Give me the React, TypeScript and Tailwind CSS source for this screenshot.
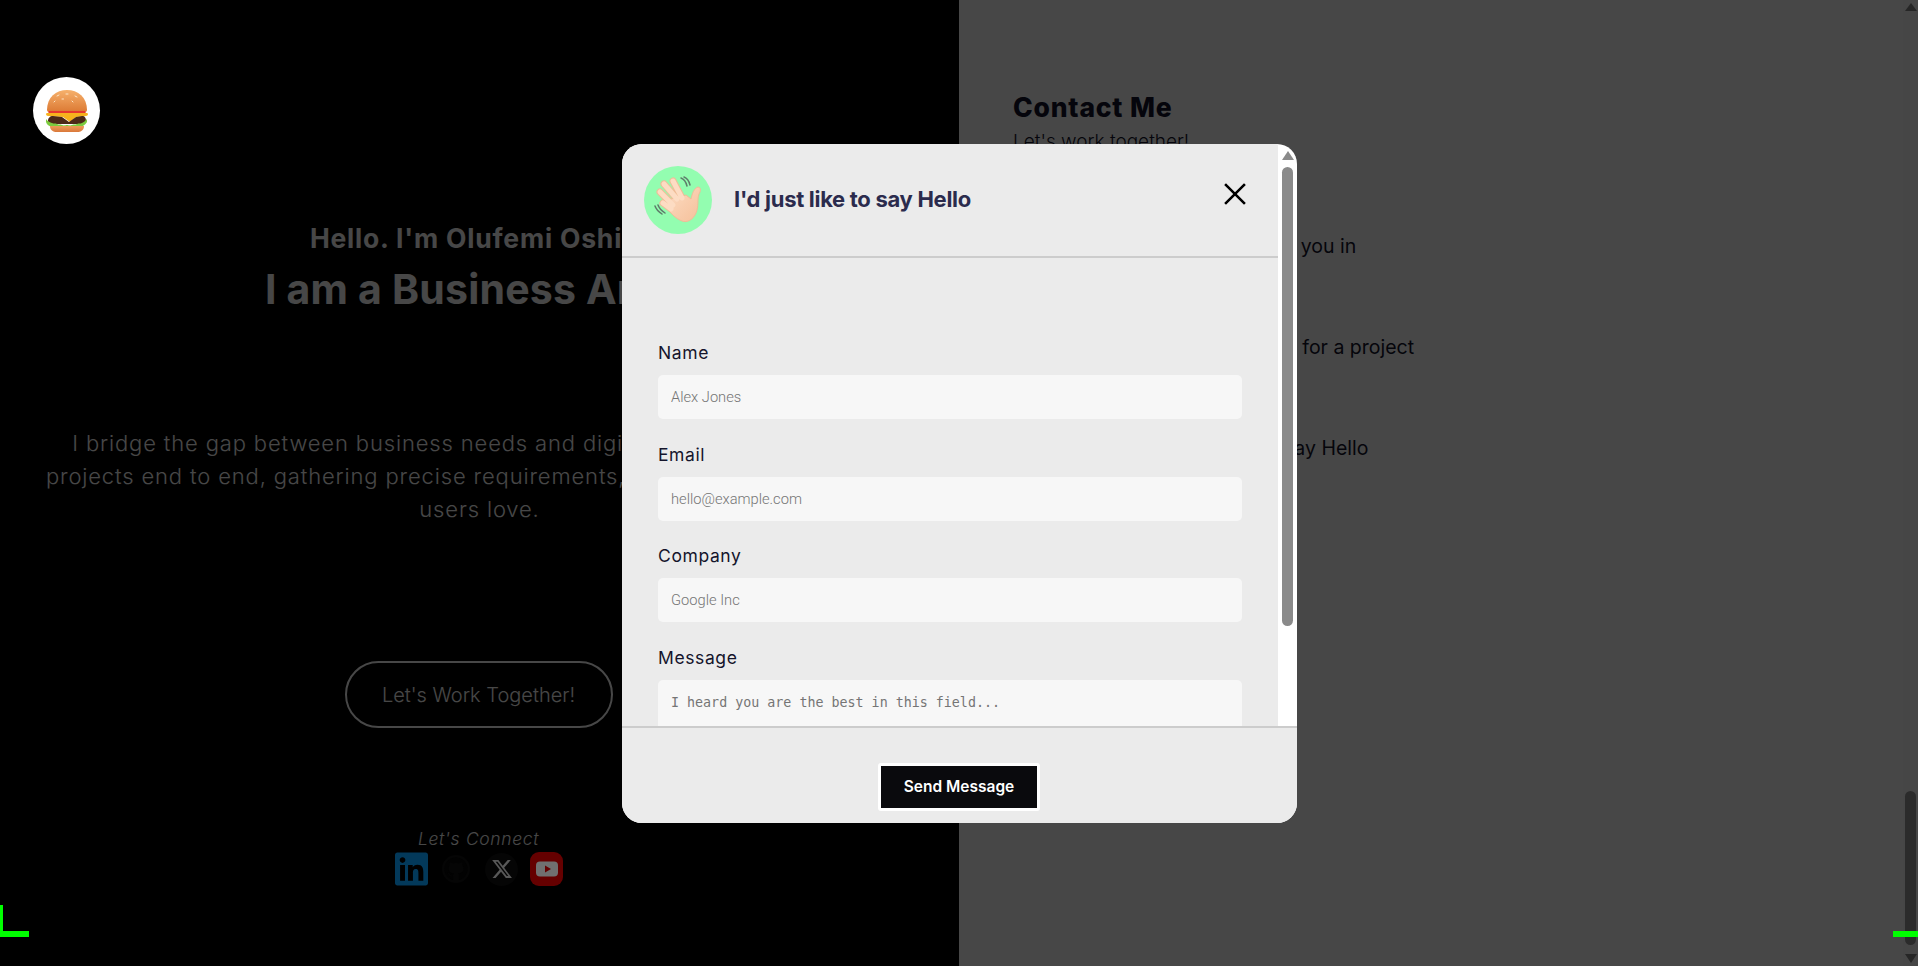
import { FaGithub, FaLinkedin } from "react-icons/fa";
import { FaXTwitter } from "react-icons/fa6";

const heading = "font-['Inter',sans-serif]";

const fields = [
  { label: "Name", placeholder: "Alex Jones" },
  { label: "Email", placeholder: "hello@example.com" },
  { label: "Company", placeholder: "Google Inc" },
];

function Burger() {
  return (
    <svg viewBox="0 0 42 42" className="h-[42px] w-[42px]">
      <defs>
        <linearGradient id="bun" x1="0" y1="0" x2="0" y2="1">
          <stop offset="0" stopColor="#f6b16c" />
          <stop offset="1" stopColor="#dc7a34" />
        </linearGradient>
        <linearGradient id="bunLow" x1="0" y1="0" x2="0" y2="1">
          <stop offset="0" stopColor="#ee9c58" />
          <stop offset="1" stopColor="#d9783a" />
        </linearGradient>
      </defs>
      <path d="M1 20C1 7 10 0 21 0s20 7 20 20c0 1-1 2-2 2H3c-1 0-2-1-2-2z" fill="url(#bun)" />
      <path d="M11 6l2-1M20 4h2M29 6l2 1M16 9h1.500M26 11l1 1M8 12l1-1" stroke="#fde6c8" strokeWidth="1" strokeLinecap="round" />
      <path d="M3 21h36c1 0 1 4-1 4H5c-3 0-3-4-2-4z" fill="#e8372f" />
      <path d="M0 24c0-1 1-1 2-1h38c1 0 2 0 2 1s-1 2-2 2l-10 1-6 5-7-5-15-1c-1 0-2-1-2-2z" fill="#f7b21d" />
      <path d="M2 31c0-3 2-5 5-5l9 1 7 5 7-5 6-1c3 0 4 2 4 5 0 2-2 3-4 3H6c-2 0-4-1-4-3z" fill="#4d2a18" />
      <path d="M0 29c2 3 4 3 6 4s3 0 5 1 3 0 5 1 4 0 5 0 3 1 5 0 3 0 5-1 3 0 5-1 3-2 5-4v3c-2 3-4 4-6 5H6c-3-1-5-2-6-5z" fill="#7ccb3f" />
      <path d="M4 36h34c0 4-3 6-7 6H11c-4 0-7-2-7-6z" fill="url(#bunLow)" />
    </svg>
  );
}

function WaveHand() {
  return (
    <svg viewBox="0 0 68 68" className="h-[68px] w-[68px]">
      <defs>
        <linearGradient id="palm" x1="0" y1="0" x2="1" y2="1">
          <stop offset="0" stopColor="#fddcc3" />
          <stop offset="1" stopColor="#f5c09a" />
        </linearGradient>
      </defs>
      <g stroke="#efbd98" strokeWidth="7" strokeLinecap="round">
        <path d="M29 15l9 17M20 18l13 15M16 26l13 13M19 37l8 6" />
      </g>
      <path
        d="M27 33L42 29l5 4C48 28 50 22 54 21c3 0 3 4 1 7-2 6 0 12-3 19-3 7-9 10-14 8-6-2-13-9-16-15z"
        fill="url(#palm)"
        stroke="#efbd98"
        strokeWidth="1"
      />
      <g stroke="#fddcc3" strokeWidth="5" strokeLinecap="round">
        <path d="M29 15l9 17M20 18l13 15M16 26l13 13M19 37l8 6" />
      </g>
      <path d="M37 12c3 1 5 4 6 8M40 11c3 1 5 4 6 8" stroke="#5f7d6b" strokeWidth="1.500" fill="none" strokeLinecap="round" />
      <path d="M11 40c1 3 4 6 7 8M14 39c1 3 4 6 7 8" stroke="#5f7d6b" strokeWidth="1.500" fill="none" strokeLinecap="round" />
    </svg>
  );
}

function Hero() {
  return (
    <section className="relative flex h-full w-[959px] shrink-0 flex-col items-center bg-black text-white">
      <div className="absolute top-[77px] left-[33px] z-20 flex h-[67px] w-[67px] items-center justify-center rounded-full bg-white">
        <Burger />
      </div>
      <h2 className={`${heading} mt-[220px] whitespace-nowrap text-[26.5px] leading-[36px] font-bold tracking-[0.8px]`}>
        Hello. I'm Olufemi Oshin.
      </h2>
      <h1 className={`${heading} mt-[6px] whitespace-nowrap text-[41px] leading-[54px] font-bold tracking-[0.2px]`}>I am a Business Archi</h1>
      <p className={`${heading} mt-[111px] text-center text-[22px] leading-[33px] font-light tracking-[0.85px] whitespace-nowrap`}>
        I bridge the gap between business needs and digital solutions. I deliver IT
        <br />
        projects end to end, gathering precise requirements, and delivering great apps
        <br />
        users love.
      </p>
      <button
        className={`${heading} mt-[135px] mr-[2px] h-[67px] w-[268px] rounded-full border-2 border-white text-[20px] font-light`}
      >
        Let's Work Together!
      </button>
      <p className={`${heading} mt-[99px] mr-[2px] text-[17.5px] leading-[24px] font-light tracking-[0.65px] italic`}>Let's Connect</p>
      <div className="relative z-20 mt-[-1px] mr-[1px] flex items-center">
        <FaLinkedin className="h-[38px] w-[33px] text-[#03395a]" />
        <span className="ml-[14px] flex h-[28px] w-[28px] items-center justify-center rounded-full bg-[#050505]">
          <FaGithub className="h-[24px] w-[24px] text-[#020202]" />
        </span>
        <span className="ml-[15px] flex h-[33px] w-[33px] items-center justify-center rounded-full bg-[#050505]">
          <FaXTwitter className="h-[22px] w-[22px] text-[#585858]" />
        </span>
        <span className="ml-[12px] flex h-[34px] w-[33px] items-center justify-center rounded-[9px] bg-[#650000]">
          <svg viewBox="0 0 24 24" className="h-[24px] w-[24px]">
            <rect x="1" y="4.500" width="22" height="15" rx="4" fill="#707070" />
            <path d="M10 8.500l6 3.500-6 3.500z" fill="#650000" />
          </svg>
        </span>
      </div>
    </section>
  );
}

function ContactPanel() {
  return (
    <section className="h-full min-w-0 flex-1 bg-white pt-[90px] pl-[54px] text-[#14142b]">
      <h2 className={`${heading} text-[26.5px] leading-[34px] font-extrabold tracking-[0.8px]`}>Contact Me</h2>
      <p className={`${heading} mt-[4px] text-[19px] leading-[28px] font-light`}>Let's work together!</p>
      <div className={`${heading} mt-[76px] flex flex-col gap-[73px] text-[19.5px] leading-[28px] whitespace-nowrap`}>
        <p className="pl-[116px]">I would like to hire you in</p>
        <p className="pl-[27px]">I would like to hire someone for a project</p>
        <p className="pl-[101px]">I would just like to say Hello</p>
      </div>
    </section>
  );
}

function ContactModal() {
  return (
    <div className="absolute top-[144px] left-[622px] z-10 flex h-[679px] w-[675px] flex-col overflow-hidden rounded-[20px] bg-white">
      <div className="flex min-h-0 flex-1">
        <div className="min-w-0 flex-1 overflow-hidden bg-[#ebebeb]">
          <header className="flex h-[114px] items-center border-b-2 border-[#cccccc] pr-[29px] pl-[22px]">
            <div className="h-[68px] w-[68px] shrink-0 rounded-full bg-[#93fdb0]">
              <WaveHand />
            </div>
            <h3 className={`${heading} mb-[2px] ml-[22px] flex-1 text-[22px] font-bold tracking-[-0.3px] text-[#2b2b4d]`}>
              I'd just like to say Hello
            </h3>
            <svg viewBox="0 0 24 24" className="mb-[12px] h-[28px] w-[28px]" fill="none" stroke="#000" strokeWidth="2.2">
              <path d="M3.500 3.500l17 17M20.500 3.500l-17 17" />
            </svg>
          </header>
          <form className="px-[36px] pt-[82px]">
            {fields.map((f) => (
              <label key={f.label} className="mb-[22.67px] block">
                <span className={`${heading} mb-[9px] block text-[17.5px] leading-[26px] tracking-[0.6px] text-[#14142b]`}>{f.label}</span>
                <input
                  placeholder={f.placeholder}
                  className="h-[44px] w-full rounded-[5px] bg-[#f7f7f7] px-[13px] font-['Roboto',sans-serif] text-[14.7px] font-light outline-none placeholder:text-[#757575]"
                />
              </label>
            ))}
            <label className="block">
              <span className={`${heading} mb-[9px] block text-[17.5px] leading-[26px] tracking-[0.6px] text-[#14142b]`}>Message</span>
              <textarea
                placeholder="I heard you are the best in this field..."
                className="h-[120px] w-full resize-none rounded-[5px] bg-[#f7f7f7] px-[13px] py-[15px] font-['DejaVu_Sans_Mono',monospace] text-[13.33px] leading-[16px] outline-none placeholder:text-[#757575]"
              />
            </label>
          </form>
        </div>
        <div className="flex w-[19px] shrink-0 flex-col items-center pt-[7px]">
          <div className="h-0 w-0 border-x-[6.5px] border-b-[9px] border-x-transparent border-b-[#8a8a8a]" />
          <div className="mt-[7px] h-[459px] w-[11px] rounded-full bg-[#8a8a8a]" />
        </div>
      </div>
      <footer className="flex h-[97px] shrink-0 items-start justify-center border-t-2 border-[#cccccc] bg-[#ebebeb] pt-[35px]">
        <button className="mr-[1px] h-[48px] w-[162px] rounded-[3px] border-[3px] border-white bg-[#0a0a0d] font-['Inter',sans-serif] text-[15.5px] font-semibold text-white">
          Send Message
        </button>
      </footer>
    </div>
  );
}

export default function App() {
  return (
    <div className="relative flex h-[966px] w-full overflow-hidden">
      <Hero />
      <ContactPanel />
      {/* dim layer sits over both panels and the page scrollbar */}
      <div className="absolute inset-y-0 right-0 flex w-[15px] flex-col items-center bg-[#fafafa]">
        <div className="mt-[3px] h-0 w-0 border-x-[6px] border-b-[8px] border-x-transparent border-b-[#888888]" />
        <div className="mt-auto h-[154px] w-[11px] rounded-full bg-[#999999]" />
        <div className="mt-[9px] mb-[3px] h-0 w-0 border-x-[6px] border-t-[9px] border-x-transparent border-t-[#888888]" />
      </div>
      <div className="absolute inset-0 bg-black/[0.72]" />
      <ContactModal />
      <div className="absolute top-[905px] left-0 z-20 h-[32px] w-[3px] bg-[#00ff00]" />
      <div className="absolute top-[931px] left-0 z-20 h-[6px] w-[29px] bg-[#00ff00]" />
      <div className="absolute top-[931px] right-0 z-20 h-[6px] w-[25px] bg-[#00ff00]" />
    </div>
  );
}
